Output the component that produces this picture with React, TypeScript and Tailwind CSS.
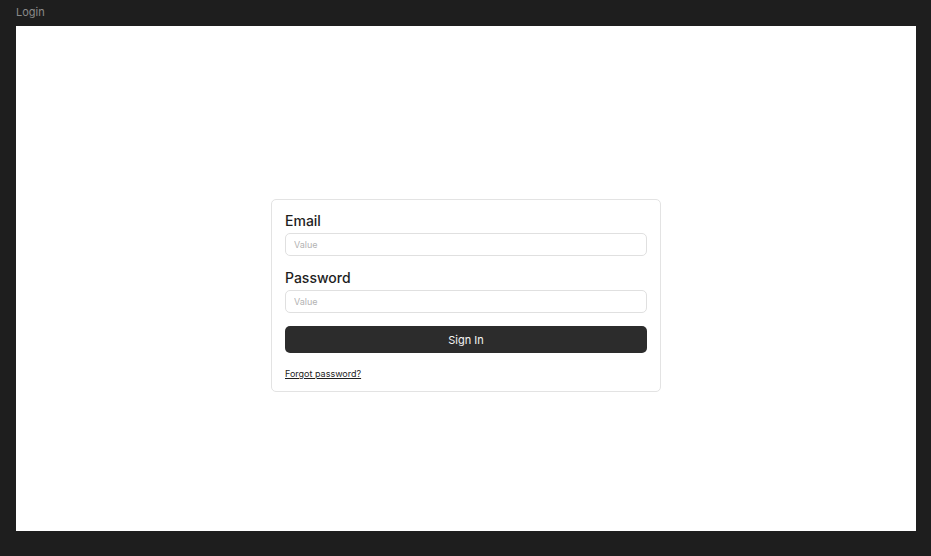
export default function App() {
  return (
    <div className="w-[931px] h-[556px] bg-[#1e1e1e] px-4 flex flex-col font-['Inter',_'Noto_Sans',_sans-serif]">
      <div className="h-[26px] pt-[6px] text-[11px] leading-[13px] text-[#8a8a8a]">Login</div>

      <div className="w-[900px] h-[505px] bg-white flex justify-center items-start pt-[173px]">
        <div className="w-[390px] border border-[#e3e3e3] rounded-[5px] px-[13px] pt-[12px] pb-[12px] flex flex-col gap-[13px]">
          {/* Email */}
          <div className="flex flex-col gap-[4px]">
            <label className="text-[14px] leading-[17px] font-medium text-[#1e1e1e]">Email</label>
            <input
              type="text"
              placeholder="Value"
              className="h-[23px] w-full border border-[#e0e0e0] rounded-[5px] px-[8px] text-[9px] text-[#1e1e1e] placeholder:text-[#b3b3b3] outline-none"
            />
          </div>

          {/* Password */}
          <div className="flex flex-col gap-[4px]">
            <label className="text-[14px] leading-[17px] font-medium text-[#1e1e1e]">Password</label>
            <input
              type="password"
              placeholder="Value"
              className="h-[23px] w-full border border-[#e0e0e0] rounded-[5px] px-[8px] text-[9px] text-[#1e1e1e] placeholder:text-[#b3b3b3] outline-none"
            />
          </div>

          <button className="h-[27px] w-full bg-[#2c2c2c] rounded-[5px] text-[11px] leading-[13px] text-[#f5f5f5] pt-[1px]">
            Sign In
          </button>

          <a href="#" className="mt-[2px] self-start text-[9px] leading-[11px] text-[#1e1e1e] underline">
            Forgot password?
          </a>
        </div>
      </div>
    </div>
  )
}
